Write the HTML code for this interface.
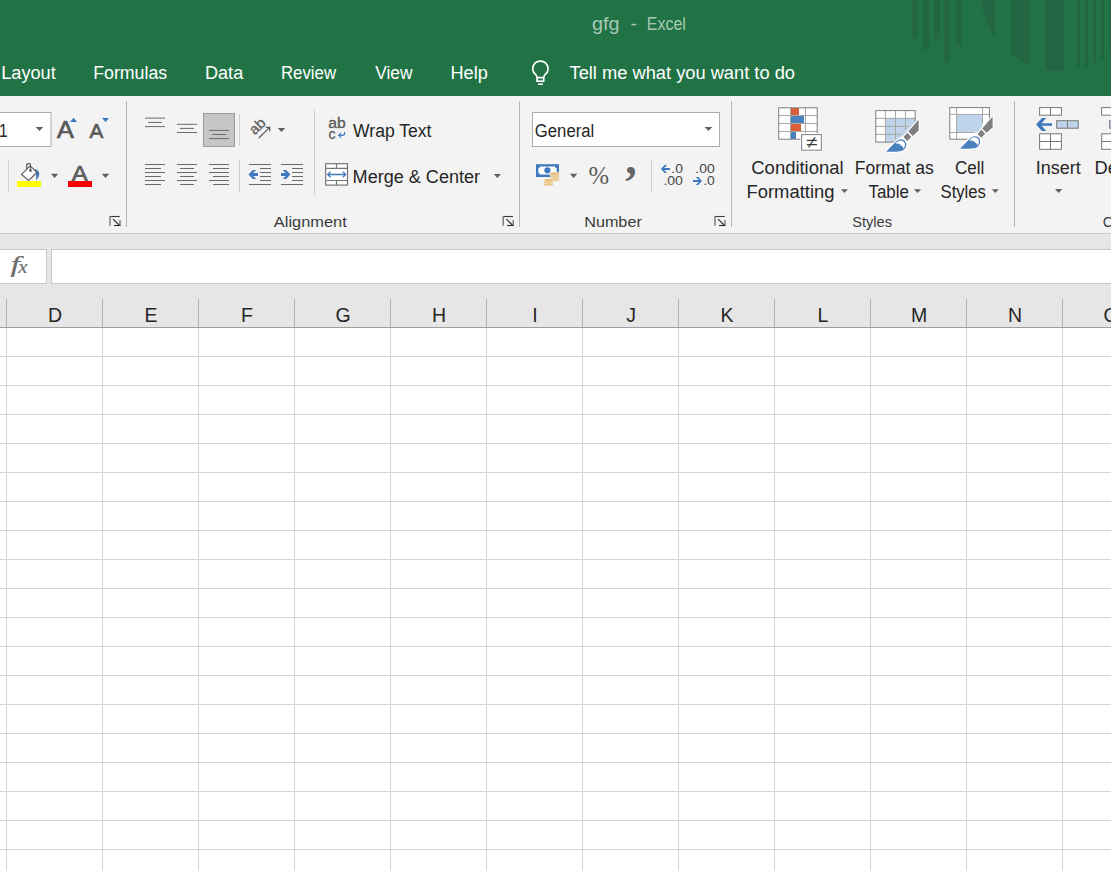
<!DOCTYPE html>
<html lang="en">
<head>
<meta charset="utf-8">
<title>gfg - Excel</title>
<style>
html,body{margin:0;padding:0;}
body{width:1111px;height:871px;overflow:hidden;position:relative;background:#fff;font-family:"Liberation Sans",sans-serif;}
#titlebar{position:absolute;left:0;top:0;width:1111px;height:96px;background:#217346;}
#ribbon{position:absolute;left:0;top:96px;width:1111px;height:137px;background:#f3f3f3;}
#ribbonedge{position:absolute;left:0;top:233px;width:1111px;height:1px;background:#cdcdcd;}
#fbar{position:absolute;left:0;top:234px;width:1111px;height:93px;background:#e6e6e6;}
#fxbox{position:absolute;left:-2px;top:249px;width:47px;height:33px;background:#fff;border:1px solid #c8c8c8;}
#finput{position:absolute;left:51px;top:249px;width:1070px;height:33px;background:#fff;border:1px solid #c8c8c8;}
#hdrline{position:absolute;left:0;top:327px;width:1111px;height:1px;background:#9e9e9e;}
#grid{position:absolute;left:0;top:328px;width:1111px;height:543px;background:#fff;}
.vl{position:absolute;top:0;width:1px;height:543px;background:#d4d4d4;}
.hl{position:absolute;left:0;width:1111px;height:1px;background:#d4d4d4;}
.hv{position:absolute;top:299px;width:1px;height:28px;background:#b1b1b1;}
#ov{position:absolute;left:0;top:0;}
</style>
</head>
<body>
<div id="titlebar"></div>
<div id="ribbon"></div>
<div id="ribbonedge"></div>
<div id="fbar"></div>
<div id="fxbox"></div>
<div id="finput"></div>
<div id="grid">
<div class="vl" style="left:6px"></div><div class="vl" style="left:102px"></div><div class="vl" style="left:198px"></div><div class="vl" style="left:294px"></div><div class="vl" style="left:390px"></div><div class="vl" style="left:486px"></div><div class="vl" style="left:582px"></div><div class="vl" style="left:678px"></div><div class="vl" style="left:774px"></div><div class="vl" style="left:870px"></div><div class="vl" style="left:966px"></div><div class="vl" style="left:1062px"></div>
<div class="hl" style="top:28px"></div><div class="hl" style="top:57px"></div><div class="hl" style="top:86px"></div><div class="hl" style="top:115px"></div><div class="hl" style="top:144px"></div><div class="hl" style="top:173px"></div><div class="hl" style="top:202px"></div><div class="hl" style="top:231px"></div><div class="hl" style="top:260px"></div><div class="hl" style="top:289px"></div><div class="hl" style="top:318px"></div><div class="hl" style="top:347px"></div><div class="hl" style="top:376px"></div><div class="hl" style="top:405px"></div><div class="hl" style="top:434px"></div><div class="hl" style="top:463px"></div><div class="hl" style="top:492px"></div><div class="hl" style="top:521px"></div>
</div>
<div class="hv" style="left:6px"></div><div class="hv" style="left:102px"></div><div class="hv" style="left:198px"></div><div class="hv" style="left:294px"></div><div class="hv" style="left:390px"></div><div class="hv" style="left:486px"></div><div class="hv" style="left:582px"></div><div class="hv" style="left:678px"></div><div class="hv" style="left:774px"></div><div class="hv" style="left:870px"></div><div class="hv" style="left:966px"></div><div class="hv" style="left:1062px"></div>
<div id="hdrline"></div>
<svg id="ov" width="1111" height="871" viewBox="0 0 1111 871" font-family="'Liberation Sans',sans-serif">
<g id="deco" fill="#236643">
<rect x="912.2" y="0" width="5.9" height="38.6"/>
<rect x="923.1" y="0" width="5.9" height="49.5"/>
<rect x="934.2" y="0" width="5.7" height="38.6"/>
<rect x="943.9" y="0" width="6.1" height="62.8"/>
<rect x="956.1" y="0" width="5.8" height="45.7"/>
<clipPath id="circ"><circle cx="1060" cy="-8.4" r="79.4"/></clipPath>
<g clip-path="url(#circ)">
<rect x="975" y="0" width="20.2" height="96"/>
<rect x="1010.8" y="0" width="19.2" height="96"/>
<rect x="1045" y="0" width="19" height="96"/>
<rect x="1076.7" y="0" width="3.2" height="96"/>
<rect x="1084.9" y="0" width="3.1" height="96"/>
<rect x="1093" y="0" width="3" height="96"/>
<rect x="1101" y="0" width="3" height="96"/>
<rect x="1109" y="0" width="3" height="96"/>
</g>
</g>
<g fill="#a6c9b5" font-size="17.5">
<text x="592" y="29.7" textLength="27.5" lengthAdjust="spacingAndGlyphs">gfg</text>
<text x="630.6" y="29.7" textLength="6.5" lengthAdjust="spacingAndGlyphs">-</text>
<text x="646.8" y="29.7" textLength="39" lengthAdjust="spacingAndGlyphs">Excel</text>
</g>
<g fill="#ffffff" font-size="18">
<text x="1.2" y="78.6" textLength="54.5" lengthAdjust="spacingAndGlyphs">Layout</text>
<text x="93.2" y="78.6" textLength="74" lengthAdjust="spacingAndGlyphs">Formulas</text>
<text x="205" y="78.6" textLength="38.2" lengthAdjust="spacingAndGlyphs">Data</text>
<text x="281" y="78.6" textLength="55" lengthAdjust="spacingAndGlyphs">Review</text>
<text x="375.2" y="78.6" textLength="37.3" lengthAdjust="spacingAndGlyphs">View</text>
<text x="450.5" y="78.6" textLength="37.3" lengthAdjust="spacingAndGlyphs">Help</text>
<text x="569.5" y="78.9" textLength="225.5" lengthAdjust="spacingAndGlyphs">Tell me what you want to do</text>
</g>
<g fill="none" stroke="#ffffff" stroke-width="1.7" transform="translate(530,59)">
<path d="M7.1,18.5 C7.1,15.8 4.6,15 3.6,13.3 A7.65,7.65 0 1 1 17.2,13.3 C16.2,15 13.7,15.8 13.7,18.5"/>
<rect x="7.1" y="18.6" width="6.6" height="3.6"/>
<path d="M8,25.2 H12.9" stroke-width="1.5"/>
</g>
<g id="g-font">
<rect x="-2" y="112.5" width="53" height="34" fill="#fff" stroke="#ababab" stroke-width="1"/>
<text x="-1" y="136.9" font-size="18" fill="#262626" textLength="8.6" lengthAdjust="spacingAndGlyphs">1</text>
<path d="M35.7,127.1 h7.6 l-3.8,4 z" fill="#606060"/>
<text x="56.9" y="137.9" font-size="23.6" fill="#595959" stroke="#595959" stroke-width="0.7" textLength="16.8" lengthAdjust="spacingAndGlyphs">A</text>
<path d="M70,121.9 h7.1 l-3.55,-4.1 z" fill="#3f79bd"/>
<text x="89.5" y="137.9" font-size="19.4" fill="#595959" stroke="#595959" stroke-width="0.6" textLength="13.8" lengthAdjust="spacingAndGlyphs">A</text>
<path d="M102,117.9 h7 l-3.5,4.2 z" fill="#3f79bd"/>
<rect x="8" y="160" width="1" height="32" fill="#d2d2d2"/>
<!-- paint bucket -->
<path d="M33.7,168.8 C36,169.2 38.6,170.4 39,172.2 C39.4,174.5 39.2,176 38.2,177.6 C37.4,178.8 36.8,179.6 36.4,180.6 C36,178.5 36.2,176 36.1,174.2 z" fill="#3f79bd"/>
<path d="M30.2,165.9 L36.9,172.4 L28.6,180.5 L21.5,174.4 z" fill="#fff" stroke="#5e5e5e" stroke-width="1.2"/>
<path d="M26.7,169.2 V164.8 Q26.7,163.7 27.8,163.7 H29.4 Q30.5,163.7 30.5,164.8 V170.5" fill="none" stroke="#5e5e5e" stroke-width="1.2"/>
<circle cx="30.5" cy="170.6" r="1.4" fill="#5e5e5e"/>
<rect x="17" y="181" width="24" height="6" fill="#ffff00"/>
<path d="M50.9,173.8 h7.4 l-3.7,4.3 z" fill="#606060"/>
<text x="71.7" y="180.9" font-size="22.3" fill="#5e5e5e" stroke="#5e5e5e" stroke-width="0.7" textLength="16" lengthAdjust="spacingAndGlyphs">A</text>
<rect x="68" y="181" width="24" height="6" fill="#ff0000"/>
<path d="M101.8,173.8 h7.4 l-3.7,4.3 z" fill="#606060"/>
<!-- dialog launcher -->
<g id="dl1">
<path d="M109.9,216.5 H119.8" stroke="#3a3a3a" stroke-width="1.1" fill="none"/>
<path d="M110,216 V225.8" stroke="#777" stroke-width="1.4" fill="none"/>
<path d="M113.1,219.2 L119.6,225.5" stroke="#2b2b2b" stroke-width="1.1" fill="none"/>
<path d="M120,220.1 V225.7" stroke="#777" stroke-width="1.4" fill="none"/>
<path d="M114,225.5 H120.5" stroke="#2b2b2b" stroke-width="1.1" fill="none"/>
</g>
<rect x="126" y="101" width="1" height="126" fill="#b4b4b4"/>
</g>
<g id="g-align"><g fill="#6a6a6a"><rect x="145.0" y="117.6" width="20.0" height="1" /><rect x="148.0" y="121.9" width="14.0" height="1" /><rect x="145.0" y="126.1" width="20.0" height="1" /><rect x="177.0" y="123.8" width="20.0" height="1" /><rect x="180.0" y="127.9" width="14.0" height="1" /><rect x="177.0" y="132.0" width="20.0" height="1" /></g><rect x="203.5" y="113.5" width="31" height="33" fill="#c6c6c6" stroke="#9d9d9d" stroke-width="1"/><g fill="#6a6a6a"><rect x="209.0" y="129.9" width="20.0" height="1" /><rect x="212.0" y="134.0" width="14.0" height="1" /><rect x="209.0" y="138.1" width="20.0" height="1" /><rect x="145.0" y="164.0" width="20.0" height="1" /><rect x="145.0" y="168.0" width="16.0" height="1" /><rect x="145.0" y="172.0" width="20.0" height="1" /><rect x="145.0" y="176.0" width="16.0" height="1" /><rect x="145.0" y="180.0" width="20.0" height="1" /><rect x="145.0" y="184.0" width="16.0" height="1" /><rect x="177.0" y="164.0" width="20.0" height="1" /><rect x="180.0" y="168.0" width="14.0" height="1" /><rect x="177.0" y="172.0" width="20.0" height="1" /><rect x="180.0" y="176.0" width="14.0" height="1" /><rect x="177.0" y="180.0" width="20.0" height="1" /><rect x="180.0" y="184.0" width="14.0" height="1" /><rect x="209.0" y="164.0" width="20.0" height="1" /><rect x="213.0" y="168.0" width="16.0" height="1" /><rect x="209.0" y="172.0" width="20.0" height="1" /><rect x="213.0" y="176.0" width="16.0" height="1" /><rect x="209.0" y="180.0" width="20.0" height="1" /><rect x="213.0" y="184.0" width="16.0" height="1" /><rect x="249.0" y="164.0" width="22.0" height="1" /><rect x="260.0" y="168.0" width="11.0" height="1" /><rect x="260.0" y="172.0" width="11.0" height="1" /><rect x="260.0" y="176.0" width="11.0" height="1" /><rect x="260.0" y="180.0" width="11.0" height="1" /><rect x="249.0" y="184.0" width="22.0" height="1" /><rect x="281.0" y="164.0" width="22.0" height="1" /><rect x="292.0" y="168.0" width="11.0" height="1" /><rect x="292.0" y="172.0" width="11.0" height="1" /><rect x="292.0" y="176.0" width="11.0" height="1" /><rect x="292.0" y="180.0" width="11.0" height="1" /><rect x="281.0" y="184.0" width="22.0" height="1" /></g><rect x="239" y="114" width="1" height="32" fill="#cfcfcf"/>
<rect x="239" y="160" width="1" height="32" fill="#cfcfcf"/>
<rect x="314" y="110" width="1" height="85" fill="#cfcfcf"/>
<path d="M248.5,174.5 L252.8,169.9 H256.2 L253.2,173.1 H258 V175.9 H253.2 L256.2,179.1 H252.8 z" fill="#3f79bd"/>
<path d="M290.4,174.5 L286.1,169.9 H282.7 L285.7,173.1 H281 V175.9 H285.7 L282.7,179.1 H286.1 z" fill="#3f79bd"/>
<!-- orientation -->
<text transform="translate(254.8,135.6) rotate(-45)" font-size="14.5" fill="#5e5e5e" stroke="#5e5e5e" stroke-width="0.3" textLength="16.6" lengthAdjust="spacingAndGlyphs">ab</text>
<path d="M258.8,138 L269.4,127.6 M265.8,127.4 H269.7 V131.2" fill="none" stroke="#5e5e5e" stroke-width="1.3"/>
<path d="M277.8,128 h7.4 l-3.7,4.1 z" fill="#606060"/>
<!-- wrap text -->
<text x="328.3" y="128.4" font-size="14" fill="#5a5a5a" stroke="#5a5a5a" stroke-width="0.3" textLength="17.5" lengthAdjust="spacingAndGlyphs">ab</text>
<text x="328.5" y="138.7" font-size="14" fill="#5a5a5a" stroke="#5a5a5a" stroke-width="0.3" textLength="7" lengthAdjust="spacingAndGlyphs">c</text>
<path d="M344.6,132 V133.3 Q344.6,135.3 342.4,135.3 H339 M341.2,132.9 L338.7,135.3 L341.2,137.8" fill="none" stroke="#3f79bd" stroke-width="1.2"/>
<text x="353" y="137" font-size="18" fill="#262626" textLength="78.5" lengthAdjust="spacingAndGlyphs">Wrap Text</text>
<!-- merge -->
<rect x="325.7" y="163.7" width="21.8" height="21.4" fill="#fff" stroke="#767676" stroke-width="1.2"/>
<path d="M325.7,168.3 H347.5 M325.7,180.5 H347.5 M336.5,163.7 V168.3 M336.5,180.5 V185.1" stroke="#767676" stroke-width="1.2" fill="none"/>
<path d="M328,174.5 H345.3 M330.6,171.6 L327.6,174.5 L330.6,177.4 M342.7,171.6 L345.7,174.5 L342.7,177.4" stroke="#3f79bd" stroke-width="1.3" fill="none"/>
<text x="352.6" y="182.8" font-size="18" fill="#262626" textLength="127.5" lengthAdjust="spacingAndGlyphs">Merge &amp; Center</text>
<path d="M493.8,173.9 h7.2 l-3.6,4 z" fill="#606060"/>
<text x="273.8" y="226.8" font-size="15.5" fill="#3b3b3b" textLength="73" lengthAdjust="spacingAndGlyphs">Alignment</text>
<use href="#dl1" x="393.2" y="0"/>
<rect x="519" y="101" width="1" height="126" fill="#b4b4b4"/>
</g>
<g id="g-number">
<rect x="532.5" y="112.5" width="187" height="34" fill="#fff" stroke="#ababab" stroke-width="1"/>
<text x="534.8" y="137" font-size="18" fill="#262626" textLength="59.5" lengthAdjust="spacingAndGlyphs">General</text>
<path d="M704.7,127.1 h7.6 l-3.8,4 z" fill="#606060"/>
<!-- accounting -->
<rect x="536" y="164.2" width="23" height="12.8" fill="#3f79bd"/>
<path d="M540,166.5 H555 Q555,168.2 556.7,168.2 V173 Q555,173 555,174.6 H540 Q540,173 538.3,173 V168.2 Q540,168.2 540,166.5 z" fill="#fff"/>
<circle cx="547.4" cy="170.3" r="3.1" fill="#3f79bd"/>
<g fill="#e9b96e" stroke="#f3f3f3" stroke-width="0.7">
<ellipse cx="554.7" cy="179.6" rx="4.7" ry="1.7"/>
<ellipse cx="554.7" cy="177.6" rx="4.7" ry="1.7"/>
<ellipse cx="554.7" cy="175.6" rx="4.7" ry="1.7"/>
<ellipse cx="554.7" cy="173.6" rx="4.7" ry="1.7"/>
<ellipse cx="548.5" cy="184.4" rx="4.7" ry="1.7"/>
<ellipse cx="548.5" cy="182.4" rx="4.7" ry="1.7"/>
<ellipse cx="548.5" cy="180.4" rx="4.7" ry="1.7"/>
</g>
<path d="M569.9,173.8 h7.4 l-3.7,4.2 z" fill="#606060"/>
<text x="588.6" y="183.6" font-size="26" font-family="'Liberation Serif',serif" fill="#5c5c5c" textLength="20.6" lengthAdjust="spacingAndGlyphs">%</text>
<text x="625.3" y="174.2" font-size="46" font-weight="bold" font-family="'Liberation Serif',serif" fill="#666">,</text>
<rect x="651" y="160" width="1" height="32" fill="#cfcfcf"/>
<!-- decimals -->
<g font-size="12.5" fill="#4a4a4a">
<text x="671.3" y="172.8" textLength="11.6" lengthAdjust="spacingAndGlyphs">.0</text>
<text x="663.4" y="185" textLength="19.5" lengthAdjust="spacingAndGlyphs">.00</text>
<text x="695.3" y="172.8" textLength="19.5" lengthAdjust="spacingAndGlyphs">.00</text>
<text x="703.2" y="185" textLength="11.6" lengthAdjust="spacingAndGlyphs">.0</text>
</g>
<path d="M660.9,169 L664.7,165 H667.1 L664.2,168.1 H670 V169.9 H664.2 L667.1,173 H664.7 z" fill="#3f79bd"/>
<path d="M702,181 L698.2,177 H695.8 L698.7,180.1 H693 V181.9 H698.7 L695.8,185 H698.2 z" fill="#3f79bd"/>
<text x="584.2" y="226.8" font-size="15.5" fill="#3b3b3b" textLength="57.6" lengthAdjust="spacingAndGlyphs">Number</text>
<use href="#dl1" x="605" y="0"/>
<rect x="731" y="101" width="1" height="126" fill="#b4b4b4"/>
</g>
<g id="g-styles">
<!-- conditional formatting -->
<rect x="778.7" y="107.8" width="38.5" height="31.4" fill="#fff"/>
<rect x="791" y="108" width="8" height="7" fill="#d9603b"/>
<rect x="791" y="116" width="13" height="7" fill="#4a80bd"/>
<rect x="791" y="124" width="10" height="7" fill="#d9603b"/>
<rect x="791" y="132" width="5" height="7" fill="#4a80bd"/>
<path d="M778.7,115.5 H817.2 M778.7,123.5 H817.2 M778.7,131.5 H817.2 M790.5,107.8 V139.2 M805.5,107.8 V139.2" stroke="#a8a8a8" stroke-width="1" fill="none"/>
<rect x="778.7" y="107.8" width="38.5" height="31.4" fill="none" stroke="#7f7f7f" stroke-width="1"/>
<rect x="800.2" y="133.2" width="22.6" height="18.4" fill="#fbfbfb"/>
<rect x="801.6" y="134.6" width="19.8" height="15.6" fill="#fff" stroke="#7f7f7f" stroke-width="1"/>
<text x="806" y="148.2" font-size="17" fill="#3b3b3b" textLength="11.4" lengthAdjust="spacingAndGlyphs">≠</text>
<g font-size="18" fill="#262626">
<text x="751.3" y="173.9" textLength="92.3" lengthAdjust="spacingAndGlyphs">Conditional</text>
<text x="746.5" y="197.9" textLength="88" lengthAdjust="spacingAndGlyphs">Formatting</text>
<text x="854.8" y="173.9" textLength="79" lengthAdjust="spacingAndGlyphs">Format as</text>
<text x="868.5" y="197.9" textLength="40.4" lengthAdjust="spacingAndGlyphs">Table</text>
<text x="955" y="173.9" textLength="29.4" lengthAdjust="spacingAndGlyphs">Cell</text>
<text x="940.6" y="197.9" textLength="45.3" lengthAdjust="spacingAndGlyphs">Styles</text>
</g>
<path d="M840.9,189.3 h7.1 l-3.55,3.7 z" fill="#606060"/>
<path d="M914,189.3 h7.1 l-3.55,3.7 z" fill="#606060"/>
<path d="M991.8,189.3 h7.1 l-3.55,3.7 z" fill="#606060"/>
<!-- format as table -->
<rect x="875.8" y="110.6" width="39.4" height="31.5" fill="#fff"/>
<rect x="885.4" y="118.4" width="29.8" height="23.7" fill="#bfd3ea"/>
<clipPath id="cl1"><path d="M870,105 H916 V118.9 L913.4,121 L899.7,136.5 L890.7,142.5 L886,146 H870 z"/></clipPath>
<clipPath id="cl2"><path transform="translate(73.9,-3.1)" d="M870,105 H916 V118.9 L913.4,121 L899.7,136.5 L890.7,142.5 L886,146 H870 z"/></clipPath>
<path clip-path="url(#cl1)" d="M875.8,118.4 H915.2 M875.8,126.4 H915.2 M875.8,134.4 H915.2 M885.4,110.6 V142.1 M895.5,110.6 V142.1 M905.5,110.6 V142.1" stroke="#a8a8a8" stroke-width="1" fill="none"/>
<rect x="875.8" y="110.6" width="39.4" height="31.5" fill="none" stroke="#7f7f7f" stroke-width="1"/>
<g id="brush">
<path d="M918.7,119 H925 V150 H894 L900.5,145 L907.4,137 L910.5,133.8 L918.7,125 z" fill="#f3f3f3"/>
<path d="M918.7,119.6 V130.5 L912.7,135.9 L911.3,136.9 L907.3,140.9 C907.6,143.5 906.8,146.6 904.6,149 C902,151.8 898,151.9 886,151.8 L895.6,142 C897.6,139.8 900.5,138.2 903.5,137.1 L907.5,132.7 L908.3,131.6 z" fill="#fff" stroke="#fff" stroke-width="2.4" stroke-linejoin="round"/>
<path d="M918.7,119.6 V130.5 L912.7,135.9 L908.3,131.6 z" fill="#7f7f7f"/>
<path d="M907.5,132.7 L911.3,136.9 L907.3,140.9 L903.5,137.1 z" fill="#7f7f7f"/>
<path d="M886,151.8 L895.6,142 C897.6,139.6 901.5,138.2 904.2,140.2 C907,142.4 906.8,146.6 904.6,149 C902,151.8 898,151.9 886,151.8 z" fill="#4a80bd"/>
<path d="M895.4,143.8 C896.8,141.5 899,140.3 900.8,140.4 C903.6,140.5 905.2,142.6 905,144.6 C904.9,146.2 904.4,147.6 903.4,148.7 C903.4,147 902.4,145.8 900.8,145.4 C900.4,144.2 898,143.2 895.4,143.8 z" fill="#fff"/>
</g>
<!-- cell styles -->
<rect x="949.8" y="107.6" width="39.6" height="31.6" fill="#fff"/>
<rect x="956.6" y="114.4" width="26" height="18" fill="#bfd3ea"/>
<path clip-path="url(#cl2)" d="M949.8,114.4 H989.4 M949.8,132.5 H989.4 M956.6,107.6 V139.2 M982.5,107.6 V139.2" stroke="#a8a8a8" stroke-width="1" fill="none"/>
<rect x="949.8" y="107.6" width="39.6" height="31.6" fill="none" stroke="#7f7f7f" stroke-width="1"/>
<use href="#brush" x="73.9" y="-3.1"/>
<text x="852.2" y="226.8" font-size="15.5" fill="#3b3b3b" textLength="39.8" lengthAdjust="spacingAndGlyphs">Styles</text>
<rect x="1014" y="101" width="1" height="126" fill="#b4b4b4"/>
</g>
<g id="g-cells">
<g fill="#fff" stroke="#777" stroke-width="1">
<rect x="1039.6" y="107.6" width="21.8" height="7.6"/>
<rect x="1039.6" y="133.8" width="21.8" height="15.5"/>
<rect x="1101.7" y="107.6" width="21.8" height="7.6"/>
<rect x="1101.7" y="133.8" width="21.8" height="15.5"/>
</g>
<g fill="#bfd3ea" stroke="#777" stroke-width="1">
<rect x="1056.7" y="120.7" width="21.6" height="7.5"/>
<rect x="1109.7" y="120.7" width="21.6" height="7.5"/>
</g>
<path d="M1050.5,107.6 V115.2 M1050.5,133.8 V149.3 M1039.6,141.5 H1061.4 M1067.5,120.7 V128.2 M1101.7,141.5 H1112" stroke="#777" stroke-width="1" fill="none"/>
<path d="M1036.1,124.5 L1041.9,118.1 H1046.2 L1041.6,123.2 H1052 V125.8 H1041.6 L1046.2,130.9 H1041.9 z" fill="#3f79bd"/>
<g font-size="18" fill="#262626">
<text x="1035.8" y="173.9" textLength="45" lengthAdjust="spacingAndGlyphs">Insert</text>
<text x="1094.6" y="173.9" textLength="53" lengthAdjust="spacingAndGlyphs">Delete</text>
</g>
<path d="M1055,189 h7.3 l-3.65,4.1 z" fill="#606060"/>
<text x="1102.8" y="226.8" font-size="15.5" fill="#3b3b3b" textLength="32" lengthAdjust="spacingAndGlyphs">Cells</text>
</g>
<g font-style="italic" font-family="'Liberation Serif',serif" fill="#6d6d6d" stroke="#6d6d6d" stroke-width="0.2"><text transform="translate(10.6,271.7) scale(1.42,1)" font-size="24">f</text><text transform="translate(18.2,272.9) scale(1.12,1)" font-size="18.5">x</text></g>
<g font-size="19.5" fill="#262626" text-anchor="middle"><text x="55.0" y="322">D</text><text x="151.0" y="322">E</text><text x="247.0" y="322">F</text><text x="343.0" y="322">G</text><text x="439.0" y="322">H</text><text x="535.0" y="322">I</text><text x="631.0" y="322">J</text><text x="727.0" y="322">K</text><text x="823.0" y="322">L</text><text x="919.0" y="322">M</text><text x="1015.0" y="322">N</text><text x="1111.0" y="322">O</text></g>
</svg>
</body>
</html>
